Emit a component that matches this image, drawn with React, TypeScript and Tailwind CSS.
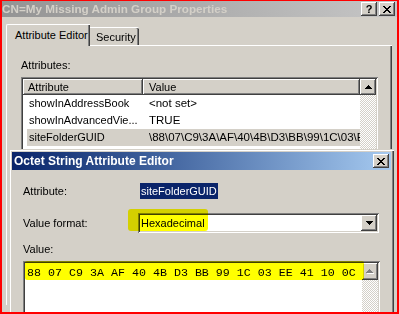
import React from "react";

const raised =
  "bg-[#d4d0c8] shadow-[inset_-1px_-1px_#404040,inset_1px_1px_#ffffff,inset_-2px_-2px_#808080,inset_2px_2px_#d4d0c8]";
const sunken =
  "shadow-[inset_1px_1px_#808080,inset_-1px_-1px_#ffffff,inset_2px_2px_#404040,inset_-2px_-2px_#d4d0c8]";
const checker =
  "[background:repeating-conic-gradient(#ffffff_0_25%,#d4d0c8_0_50%)_0_0/2px_2px]";

function XGlyph() {
  return (
    <svg width="8" height="7" viewBox="0 0 8 7" shapeRendering="crispEdges">
      <path
        d="M0 0h2v1h-2zM6 0h2v1h-2zM1 1h2v1h-2zM5 1h2v1h-2zM2 2h4v1h-4zM3 3h2v1h-2zM2 4h4v1h-4zM1 5h2v1h-2zM5 5h2v1h-2zM0 6h2v1h-2zM6 6h2v1h-2z"
        fill="#000"
      />
    </svg>
  );
}

function UpArrow({ disabled }: { disabled?: boolean }) {
  if (disabled) {
    return (
      <svg width="8" height="5" viewBox="0 0 8 5" shapeRendering="crispEdges">
        <path d="M4 1h1v1h1v1h1v1h1v1h-7v-1h1v-1h1v-1h1z" fill="#ffffff" />
        <path d="M3 0h1v1h1v1h1v1h1v1h-7v-1h1v-1h1z" fill="#808080" />
      </svg>
    );
  }
  return (
    <svg width="7" height="4" viewBox="0 0 7 4" shapeRendering="crispEdges">
      <path d="M3 0h1v1h1v1h1v1h1v1h-7v-1h1v-1h1z" fill="#000" />
    </svg>
  );
}

function DownArrow() {
  return (
    <svg width="7" height="4" viewBox="0 0 7 4" shapeRendering="crispEdges">
      <path d="M0 0h7v1h-1v1h-1v1h-1v1h-1v-1h-1v-1h-1v-1h-1z" fill="#000" />
    </svg>
  );
}

export default function App() {
  const rows = [
    { a: "showInAddressBook", v: "<not set>", sel: false },
    { a: "showInAdvancedVie...", v: "TRUE", sel: false },
    {
      a: "siteFolderGUID",
      v: "\\88\\07\\C9\\3A\\AF\\40\\4B\\D3\\BB\\99\\1C\\03\\EE\\41\\10\\0C",
      sel: true,
    },
  ];

  return (
    <div className="relative w-[399px] h-[314px] overflow-hidden bg-[#d4d0c8] border-[#ff0000] border-l-2 border-r-2 border-b-2 border-t font-['Liberation_Sans',Arial,sans-serif] text-[11px] leading-none text-black">
      {/* main window title bar */}
      <div className="h-[16px] flex items-center justify-between bg-linear-to-r from-[#949494] to-[#c6c6c6] pr-[2px]">
        <span className="font-bold text-[11.7px] text-[#d4d0c8] whitespace-nowrap">
          CN=My Missing Admin Group Properties
        </span>
        <div className="flex gap-[2px]">
          <div className={`w-[16px] h-[14px] flex items-center justify-center font-bold text-[11px] ${raised}`}>
            ?
          </div>
          <div className={`w-[16px] h-[14px] flex items-center justify-center ${raised}`}>
            <XGlyph />
          </div>
        </div>
      </div>

      {/* tabs */}
      <div className="pl-[4px]">
        <div className="mt-[7px] h-[21px] flex items-end">
          <div className="relative z-10 -mb-[1px] w-[84px] h-[22px] flex items-center pl-[8px] bg-[#d4d0c8] border-t border-l border-white rounded-tl-[2px] shadow-[inset_-1px_0_#404040,inset_-2px_0_#808080]">
            Attribute Editor
          </div>
          <div className="w-[49px] h-[18px] flex items-center pl-[6px] pt-[1px] border-t border-white rounded-tr-[2px] shadow-[inset_-1px_0_#404040,inset_-2px_0_#808080]">
            Security
          </div>
        </div>
        <div className="w-[386px] h-[260px] border-t border-l border-white shadow-[inset_-1px_0_#404040,inset_-2px_0_#808080] pl-[14px] pt-[13px]">
          <div className="h-[12px] flex items-center">Attributes:</div>
          <div className={`mt-[6px] w-[357px] h-[120px] bg-white p-[2px] flex ${sunken}`}>
            <div className="flex-1 min-w-0 flex flex-col overflow-hidden">
              <div className="h-[16px] flex">
                <div className={`w-[120px] shrink-0 h-full flex items-center pl-[5px] ${raised}`}>Attribute</div>
                <div className={`flex-1 h-full flex items-center pl-[6px] ${raised}`}>Value</div>
              </div>
              <div className="pl-[4px]">
                {rows.map((r) => (
                  <div
                    key={r.a}
                    className={`h-[17px] flex items-center whitespace-nowrap overflow-hidden ${r.sel ? "bg-[#d4d0c8]" : ""}`}
                  >
                    <div className="w-[122px] shrink-0 pl-[2px]">{r.a}</div>
                    <div className="flex-1 min-w-0 overflow-hidden text-[11.5px]">{r.v}</div>
                  </div>
                ))}
              </div>
            </div>
            <div className="w-[16px] shrink-0 flex flex-col">
              <div className={`h-[16px] flex items-center justify-center ${raised}`}>
                <UpArrow />
              </div>
              <div className={`flex-1 ${checker}`} />
            </div>
          </div>
        </div>
      </div>

      {/* Octet String Attribute Editor dialog */}
      <div className="absolute left-[7px] top-[148px] w-[385px] h-[175px] bg-[#d4d0c8] p-[3px] shadow-[inset_1px_1px_#d4d0c8,inset_2px_2px_#ffffff,inset_-1px_-1px_#404040,inset_-2px_-2px_#808080]">
        <div className="h-[18px] flex items-center justify-between bg-linear-to-r from-[#0a246a] to-[#a6caf0] pl-[2px] pr-[2px]">
          <span className="font-bold text-white text-[12px] whitespace-nowrap">
            Octet String Attribute Editor
          </span>
          <div className={`w-[16px] h-[14px] flex items-center justify-center ${raised}`}>
            <XGlyph />
          </div>
        </div>
        <div className="pl-[11px]">
          <div className="mt-[13px] h-[16px] flex items-center">
            <div className="w-[115px]">Attribute:</div>
            <div className="ml-[2px] h-full flex items-center px-[1px] bg-[#0a246a] text-white">
              siteFolderGUID
            </div>
          </div>
          <div className="mt-[14px] h-[20px] flex items-center">
            <div className="w-[115px]">Value format:</div>
            <div className={`w-[241px] h-[20px] bg-white p-[2px] flex items-center ${sunken}`}>
              <div className="flex-1 pl-[1px]">Hexadecimal</div>
              <div className={`w-[16px] h-[16px] flex items-center justify-center ${raised}`}>
                <DownArrow />
              </div>
            </div>
          </div>
          <div className="mt-[10px] h-[12px] flex items-center">Value:</div>
          <div className={`mt-[6px] w-[357px] h-[80px] bg-white p-[2px] flex ${sunken}`}>
            <div className="flex-1 min-w-0 overflow-hidden pl-[2px] pt-[5px] font-['Courier_New','Liberation_Mono',monospace] text-[11.67px] whitespace-nowrap">
              88 07 C9 3A AF 40 4B D3 BB 99 1C 03 EE 41 10 0C
            </div>
            <div className="w-[16px] shrink-0 flex flex-col">
              <div className={`h-[17px] flex items-center justify-center ${raised}`}>
                <UpArrow disabled />
              </div>
              <div className={`flex-1 ${checker}`} />
            </div>
          </div>
        </div>
      </div>

      {/* yellow marker highlights */}
      <div className="absolute left-[126px] top-[208px] w-[80px] h-[22px] rounded-[3px] bg-[#ffff00] mix-blend-multiply" />
      <div className="absolute left-[23px] top-[260px] w-[339px] h-[19px] rounded-[2px] bg-[#ffff00] mix-blend-multiply" />
    </div>
  );
}
